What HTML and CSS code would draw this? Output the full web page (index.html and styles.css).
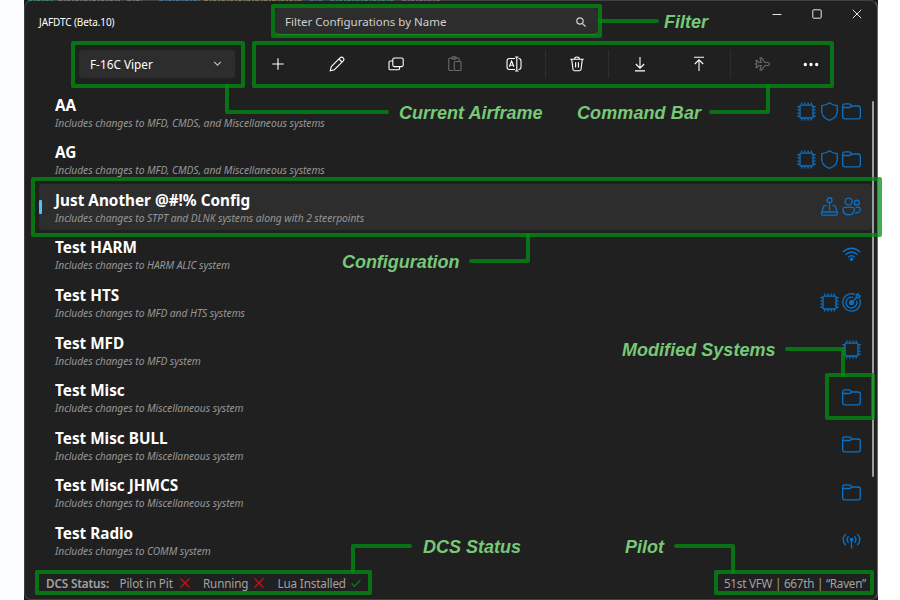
FILE: index.html
```html
<!DOCTYPE html>
<html lang="en">
<head>
<meta charset="utf-8">
<title>JAFDTC</title>
<link rel="stylesheet" href="styles.css">
</head>
<body>
<svg class="sprite" aria-hidden="true">
  <symbol id="chip" viewBox="0 0 20 20"><rect x="3.200" y="3.200" width="13.600" height="13.600" rx="1"/><path d="M5 3V.4M8.300 3V.4M11.700 3V.4M15 3V.4M5 17v2.600M8.300 17v2.600M11.700 17v2.600M15 17v2.600M3 5H.4M3 8.300H.4M3 11.700H.4M3 15H.4M17 5h2.600M17 8.300h2.600M17 11.700h2.600M17 15h2.600"/></symbol>
  <symbol id="shield" viewBox="0 0 20 20"><path d="M10 .8C12.300 2.700 15 3.600 18.200 3.900V9.500C18.200 14 15.500 17.500 10 19.300C4.500 17.500 1.800 14 1.800 9.500V3.900C5 3.600 7.700 2.700 10 .8Z"/></symbol>
  <symbol id="folder" viewBox="0 0 20 20"><path d="M.7 4.500Q.7 2 3.200 2H7.200Q8.500 2 9.300 3L10.300 4.200H16.800Q19.300 4.200 19.300 6.700V15.300Q19.300 17.800 16.800 17.800H3.200Q.7 17.800 .7 15.300ZM.9 5.800H7.400Q8.800 5.800 9.500 5L10.300 4.200"/></symbol>
  <symbol id="stick" viewBox="0 0 20 20"><circle cx="10" cy="3.400" r="2.600"/><path d="M10 6v8.500M7 9H5.300Q4.200 9 3.800 10L1.600 17Q1.200 19 3 19H17Q18.800 19 18.400 17L16.200 10Q15.800 9 14.700 9H13M2.500 15.800H17.500"/></symbol>
  <symbol id="people" viewBox="0 0 20 20"><circle cx="7" cy="4.800" r="3.700"/><circle cx="15.600" cy="6" r="2.600"/><path d="M2.800 11H11.200Q13 11 13 12.800C13 16.500 11 18.700 7 18.700C3 18.700 1 16.500 1 12.800Q1 11 2.800 11ZM14.500 11H17.500Q19.300 11 19.300 12.800C19.300 15.500 17.500 17 14 16.800"/></symbol>
  <symbol id="wifi" viewBox="0 0 20 20"><path d="M.8 7.300Q10-.5 19.200 7.300M3.600 10.300Q10 4.500 16.400 10.300M6.400 12.900Q10 9.600 13.600 12.900"/><circle class="solid" cx="10" cy="15" r="1.200"/></symbol>
  <symbol id="target" viewBox="0 0 20 20"><path d="M13.500 1.400A9.200 9.200 0 1 0 18.600 6.500M11.800 4.700A5.700 5.700 0 1 0 15.300 8.200M10 10L15.800 4.200M15 5V2L17 .8V3H19.200L18 5Z"/><circle class="solid" cx="10" cy="10" r="2"/></symbol>
  <symbol id="radio" viewBox="0 0 20 20"><path d="M4 3Q-1.600 9 4 15M7 5.500Q3.600 9 7 12.500M16 3Q21.600 9 16 15M13 5.500Q16.400 9 13 12.500M10 9V18.500"/><circle class="solid" cx="10" cy="9" r="1.300"/></symbol>
  <symbol id="cross" viewBox="0 0 10 10"><path d="M.5.5l9 9M9.500.5L.5 9.500"/></symbol>
</svg>

<main class="window">
  <header class="titlebar">
    <span class="app-title">JAFDTC (Beta.10)</span>
    <div class="filter"><span class="filter-text">Filter Configurations by Name</span>
      <svg class="search" viewBox="0 0 10 10"><circle cx="4" cy="4" r="3.200"/><path d="M6.300 6.300L9.500 9.500"/></svg>
    </div>
    <div class="win-buttons">
      <svg viewBox="0 0 10 10"><path d="M.5 5.500h9"/></svg>
      <svg viewBox="0 0 10 10"><rect x=".8" y=".8" width="8.400" height="8.400" rx="1"/></svg>
      <svg viewBox="0 0 10 10"><path d="M.8.8l8.400 8.400M9.200.8L.8 9.200"/></svg>
    </div>
  </header>

  <div class="toolbar">
    <div class="combo"><span class="combo-text">F-16C Viper</span><svg viewBox="0 0 8 8"><path d="M1 2.500l3 3 3-3"/></svg></div>
    <div class="commands">
      <span class="cmd"><svg viewBox="0 0 16 16"><path d="M8 2.200v11.600M2.200 8h11.600"/></svg></span>
      <span class="cmd"><svg viewBox="0 0 16 16"><path d="M1.200 14.800L2.300 10.600L11.200 1.700Q12.800 .4 14.200 1.800Q15.600 3.200 14.300 4.800L5.400 13.700ZM10 3l3 3"/></svg></span>
      <span class="cmd"><svg viewBox="0 0 16 16"><rect x="4.800" y="2" width="10.400" height="8.600" rx="1.500"/><path d="M4.800 5H2.300Q1 5 1 6.300V12.400Q1 13.800 2.300 13.800H10.200Q11.500 13.800 11.500 12.400V10.600"/></svg></span>
      <span class="cmd off"><svg viewBox="0 0 16 16"><path d="M6.500 14.500H3Q1.800 14.500 1.800 13.300V3.200Q1.800 2 3 2H11Q12.200 2 12.200 3.200V5"/><rect x="4.800" y=".8" width="4.500" height="2.300" rx="1"/><rect x="7.300" y="5.500" width="6.700" height="9" rx="1"/></svg></span>
      <span class="cmd"><svg viewBox="0 0 16 16"><path d="M9 2.500H3.500Q1 2.500 1 5V11Q1 13.500 3.500 13.500H9M12.500 2.500Q15 2.500 15 5V11Q15 13.500 12.500 13.500M10.800 1.500V14.500M9 1h3.600M9 15h3.600M3.300 10.800L5.600 5L7.900 10.800M4 9.200H7.200"/></svg></span>
      <i class="sep"></i>
      <span class="cmd"><svg viewBox="0 0 16 16"><path d="M1.300 3.200H14.700M5.500 3Q5.700 1 8 1Q10.300 1 10.500 3M2.700 3.400L4 13.500Q4.200 14.800 5.500 14.800H10.500Q11.800 14.800 12 13.500L13.300 3.400M6.600 6.300V11.500M9.400 6.300V11.500"/></svg></span>
      <i class="sep"></i>
      <span class="cmd"><svg viewBox="0 0 16 16"><path d="M8 1v10.800M3.800 8L8 12.200L12.200 8M3 14.900H13"/></svg></span>
      <span class="cmd"><svg viewBox="0 0 16 16"><path d="M8 15V4.200M3.800 8L8 3.800L12.200 8M3 1.200H13"/></svg></span>
      <i class="sep"></i>
      <span class="cmd off"><svg viewBox="0 0 16 16"><path d="M15.500 8Q15.500 6.500 13.500 6.500H11L7.500 1.800H6L7.200 6.500H4.800L3.500 4.500H2L2.800 7.200L1.500 8L2.800 8.800L2 11.500H3.500L4.800 9.500H7.200L6 14.200H7.500L11 9.500H13.500Q15.500 9.500 15.500 8Z"/></svg></span>
      <span class="cmd more"><svg viewBox="0 0 16 16"><circle class="solid" cx="2.300" cy="8.500" r="1.100"/><circle class="solid" cx="8" cy="8.500" r="1.100"/><circle class="solid" cx="13.700" cy="8.500" r="1.100"/></svg></span>
    </div>
  </div>

  <div class="list">
    <div class="row"><div class="info"><b>AA</b><em>Includes changes to MFD, CMDS, and Miscellaneous systems</em></div><svg class="ic"><use href="#chip"/></svg><svg class="ic"><use href="#shield"/></svg><svg class="ic"><use href="#folder"/></svg></div>
    <div class="row"><div class="info"><b>AG</b><em>Includes changes to MFD, CMDS, and Miscellaneous systems</em></div><svg class="ic"><use href="#chip"/></svg><svg class="ic"><use href="#shield"/></svg><svg class="ic"><use href="#folder"/></svg></div>
    <div class="row selected"><div class="info"><b>Just Another @#!% Config</b><em>Includes changes to STPT and DLNK systems along with 2 steerpoints</em></div><svg class="ic"><use href="#stick"/></svg><svg class="ic"><use href="#people"/></svg></div>
    <div class="row"><div class="info"><b>Test HARM</b><em>Includes changes to HARM ALIC system</em></div><svg class="ic"><use href="#wifi"/></svg></div>
    <div class="row"><div class="info"><b>Test HTS</b><em>Includes changes to MFD and HTS systems</em></div><svg class="ic"><use href="#chip"/></svg><svg class="ic"><use href="#target"/></svg></div>
    <div class="row"><div class="info"><b>Test MFD</b><em>Includes changes to MFD system</em></div><svg class="ic"><use href="#chip"/></svg></div>
    <div class="row"><div class="info"><b>Test Misc</b><em>Includes changes to Miscellaneous system</em></div><svg class="ic"><use href="#folder"/></svg></div>
    <div class="row"><div class="info"><b>Test Misc BULL</b><em>Includes changes to Miscellaneous system</em></div><svg class="ic"><use href="#folder"/></svg></div>
    <div class="row"><div class="info"><b>Test Misc JHMCS</b><em>Includes changes to Miscellaneous system</em></div><svg class="ic"><use href="#folder"/></svg></div>
    <div class="row"><div class="info"><b>Test Radio</b><em>Includes changes to COMM system</em></div><svg class="ic"><use href="#radio"/></svg></div>
    <div class="scrollbar"></div>
  </div>

  <footer class="status">
    <span class="heading">DCS Status:</span>
    <span class="state pit">Pilot in Pit</span><svg class="bad"><use href="#cross"/></svg>
    <span class="state run">Running</span><svg class="bad"><use href="#cross"/></svg>
    <span class="state lua">Lua Installed</span><svg class="good" viewBox="0 0 10 10"><path d="M.6 5.500l2.800 2.800L9.400 2.300"/></svg>
    <span class="pilot">51st VFW | 667th | “Raven”</span>
  </footer>
</main>

<svg class="notes" viewBox="0 0 900 600">
  <g class="backdrop">
    <path stroke="#3f9c8c" d="M28 .5H54"/>
    <path stroke="#8a8a8a" d="M58 .5H120M127 .5H142"/>
    <path stroke="#4d86b5" d="M159 .5H200M310 .5H324"/>
    <path stroke="#9c9066" d="M204 .5H302"/>
    <path stroke="#3f9c8c" d="M330 .5H395"/>
    <path stroke="#95719a" d="M402 .5H440"/>
  </g>
  <g class="frames">
    <rect x="273" y="6" width="327" height="30"/>
    <rect x="73" y="43" width="170" height="43"/>
    <rect x="254" y="43" width="578" height="43"/>
    <rect x="33" y="179" width="847" height="56"/>
    <rect x="827" y="375" width="46" height="43"/>
    <rect x="37" y="572" width="333" height="21"/>
    <rect x="716" y="572" width="156" height="21"/>
    <path d="M600 21H657"/>
    <path d="M227 86V112H387"/>
    <path d="M768 86V112H711"/>
    <path d="M528 235V261H471"/>
    <path d="M787 349H843V375"/>
    <path d="M353 572V546H410"/>
    <path d="M676 546H733V572"/>
  </g>
  <g class="labels">
    <text x="664" y="28" textLength="44">Filter</text>
    <text x="399" y="119" textLength="143.500">Current Airframe</text>
    <text x="577" y="119" textLength="124">Command Bar</text>
    <text x="342" y="268" textLength="117.500">Configuration</text>
    <text x="622" y="356" textLength="153.500">Modified Systems</text>
    <text x="423" y="553" textLength="98">DCS Status</text>
    <text x="625" y="553" textLength="39">Pilot</text>
  </g>
</svg>
</body>
</html>
```
FILE: styles.css
```css
* { box-sizing: border-box; }
body {
  margin: 0;
  width: 900px;
  height: 600px;
  overflow: hidden;
  background: linear-gradient(90deg, #fbfcff 24px, #fff 24px);
  font-family: "Noto Sans", "Open Sans", sans-serif;
  color: #fff;
}
svg { fill: none; stroke: currentColor; flex: none; }
.solid { fill: currentColor; }
.sprite { position: absolute; width: 0; height: 0; }

.window {
  width: 854px;
  height: 600px;
  margin-left: 24px;
  background: #202020;
  border: 1px solid #414141;
  border-right-color: #6a6a6a;
  border-radius: 8px 8px 7px 7px;
  box-shadow: 0 0 0 8px #1c1c1c;
  clip-path: inset(0);
  display: flex;
  flex-direction: column;
}
.titlebar { height: 41px; display: flex; align-items: flex-start; }
.app-title { width: 250px; padding: 14px 0 0 14px; font-size: 10px; line-height: 14px; letter-spacing: -0.1px; white-space: nowrap; }
.filter {
  width: 323px;
  height: 27px;
  margin-top: 7px;
  padding: 1px 12px 0 10px;
  display: flex;
  align-items: center;
  justify-content: space-between;
  background: #2d2d2d;
  border-bottom: 1px solid #787878;
  border-radius: 4px;
  font-size: 11.500px;
  line-height: 16px;
  color: #cfcfcf;
}
.search { width: 10px; height: 10px; stroke-width: 1.200; }
.win-buttons { margin: 8px 0 0 174px; display: flex; gap: 30px; color: #e6e6e6; }
.win-buttons svg { width: 10px; height: 10px; }

.toolbar { height: 43px; margin-bottom: 2px; display: flex; align-items: center; }
.combo {
  width: 156px;
  height: 28px;
  margin: 0 13px 0 54px;
  padding: 0 13px 0 11px;
  display: flex;
  align-items: center;
  justify-content: space-between;
  background: #2d2d2d;
  border-radius: 4px;
  font-size: 11.800px;
  line-height: 16px;
}
.combo svg { width: 9px; height: 9px; color: #c0c0c0; }
.commands { display: flex; align-items: center; }
.cmd { width: 59px; display: flex; justify-content: center; }
.cmd.more { width: 40px; }
.cmd svg { width: 16px; height: 16px; stroke-width: 1.100; }
.cmd.off { color: #6a6a6a; }
.sep { width: 4px; height: 28px; background: linear-gradient(90deg, transparent 2px, #2e2e2e 2px, #2e2e2e 3px, transparent 3px); }

.list { position: relative; flex: none; height: 476.500px; padding: 1px 5.500px 0 14px; }
.row { height: 47.600px; padding: 0 10.500px 0 16px; display: flex; align-items: center; gap: 3.500px; }
.row.selected { position: relative; z-index: 0; }
.row.selected::after {
  content: "";
  position: absolute;
  z-index: -1;
  inset: 1px 0;
  border-radius: 4px;
  background: #2d2d2d;
}
.row.selected::before {
  content: "";
  position: absolute;
  left: 0;
  top: 17px;
  width: 2.500px;
  height: 13.500px;
  border-radius: 1px;
  background: #4cc2ff;
}
.info { flex: 1; padding-top: 1.500px; display: flex; flex-direction: column; }
.info b { font-size: 15.300px; line-height: 20px; }
.info em { font-size: 10.300px; line-height: 16px; color: #969696; letter-spacing: -0.070px; }
.ic { width: 19px; height: 19px; color: #0a70c4; stroke-width: 1.400; }
.scrollbar { position: absolute; right: 3px; top: 14px; width: 2px; height: 376px; border-radius: 1px; background: #9b9b9b; }

.status { flex: 1; display: flex; align-items: center; padding: 4px 11px 0 21px; font-size: 11.700px; line-height: 16px; color: #a2a2a2; white-space: nowrap; }
.heading { width: 73.500px; font-weight: 600; letter-spacing: -0.15px; }
.state { letter-spacing: -0.15px; }
.pit { width: 60px; }
.run { width: 51px; }
.lua { width: 73px; }
.bad { width: 10px; height: 10px; color: #d01010; stroke-width: 1.200; }
.bad + .state { margin-left: 13.500px; }
.good { width: 10px; height: 10px; color: #0b7a18; stroke-width: 1.300; }
.pilot { margin-left: auto; letter-spacing: -0.25px; }

.notes { position: absolute; left: 0; top: 0; width: 900px; height: 600px; }
.backdrop { stroke-width: 1; stroke-dasharray: 4 1.500 2 1; stroke-opacity: 0.7; }
.frames { stroke: #008f10; stroke-opacity: 0.74; stroke-width: 4; stroke-linejoin: round; stroke-linecap: round; }
.labels { fill: #77c877; stroke: none; font: italic bold 18px "Liberation Sans", Arial, sans-serif; }
```
